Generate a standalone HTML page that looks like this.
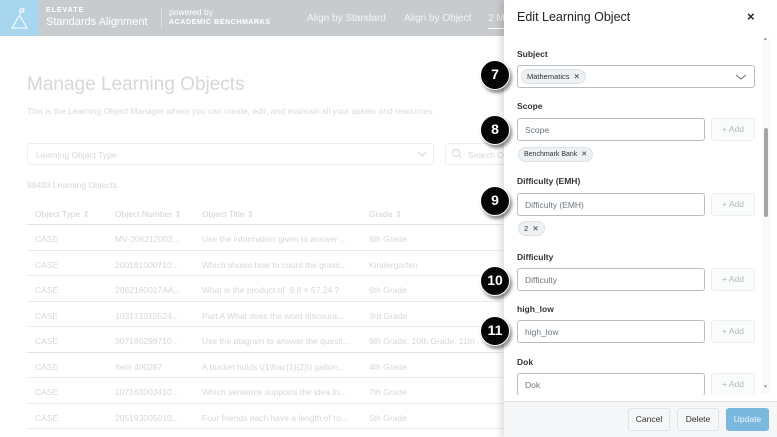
<!DOCTYPE html>
<html><head><meta charset="utf-8">
<style>
*{box-sizing:border-box;margin:0;padding:0}
body{width:777px;height:437px;overflow:hidden;background:#fff;font-family:"Liberation Sans",sans-serif;position:relative}
.a{position:absolute}
.hdr{left:0;top:0;width:777px;height:36px;background:#c8cbce}
.logo{left:0;top:0;width:39px;height:36px;background:#a9d6ef}
.nav{color:#f2f4f5;font-size:10px;top:13px}
.mt{color:#d5d7da;font-size:19px;left:27px;top:74px}
.sub{color:#d8dadc;font-size:8.5px;left:27px;top:106px}
.sel{border:1px solid #eceef0;border-radius:3px;height:22px;top:143px}
.tx{color:#d5d7d9;font-size:8.5px}
.row{left:27px;width:476px;height:1px;background:#ececec}
.pan{left:504px;top:0;width:273px;height:437px;background:#fff;box-shadow:-4px 0 6px rgba(0,0,0,.12)}
.lab{font-size:8.5px;font-weight:bold;color:#333;left:13px}
.inp{left:13px;width:188px;height:23px;border:1px solid #b9bdc2;border-radius:3px;font-size:8.5px;color:#6c7780;padding:6px 7px}
.add{left:207px;width:44px;height:23px;border:1px solid #eceef0;background:#fafbfb;border-radius:3px;font-size:8.5px;color:#b5b9bd;text-align:center;line-height:21px}
.chip{height:15px;border:1px solid #dde1e4;background:#eef1f3;border-radius:8px;font-size:7.5px;color:#333;padding:0 5px;line-height:13px;left:14px}
.bd{width:30px;height:30px;border-radius:50%;background:#050505;border:1.5px solid #fff;box-shadow:2px 3px 3px rgba(0,0,0,.45);color:#fff;font-size:14px;font-weight:bold;text-align:center;line-height:27px;left:480px}
.btn{top:408px;height:23px;border:1px solid #e0e3e6;border-radius:3px;background:#f6f7f8;font-size:8.5px;color:#333;text-align:center;line-height:21px}
</style></head><body>
<div class="a hdr"></div>
<div class="a logo"><svg width="39" height="36"><g fill="none" stroke="#fff" stroke-width="1"><path d="M20 9v7M20 9h4l-1 1.5 1 1.5h-4M19 16l-7 12h15l-7-12"/></g></svg></div>
<div class="a" style="left:46px;top:7px;color:#fff;font-size:7px;font-weight:bold;letter-spacing:1px">ELEVATE</div>
<div class="a" style="left:46px;top:16px;color:#fff;font-size:11px">Standards Alignment</div>
<div class="a" style="left:161px;top:8px;width:1px;height:20px;background:#dfe1e3"></div>
<div class="a" style="left:169px;top:7px;color:#fff;font-size:8.5px">powered by</div>
<div class="a" style="left:169px;top:19px;color:#fff;font-size:7px;font-weight:bold;letter-spacing:.6px">ACADEMIC BENCHMARKS</div>
<div class="a nav" style="left:307px">Align by Standard</div>
<div class="a nav" style="left:404px">Align by Object</div>
<div class="a nav" style="left:488px">2 M</div>
<div class="a" style="left:488px;top:28px;width:16px;height:1px;background:#fff"></div>
<div class="a mt">Manage Learning Objects</div>
<div class="a sub">This is the Learning Object Manager where you can create, edit, and maintain all your assets and resources.</div>
<div class="a sel" style="left:27px;width:407px"></div>
<div class="a tx" style="left:36px;top:150px">Learning Object Type</div>
<svg class="a" style="left:417px;top:150px" width="10" height="8"><path d="M1 2l4 4 4-4" fill="none" stroke="#d5d7d9"/></svg>
<div class="a sel" style="left:445px;width:60px"></div>
<svg class="a" style="left:451px;top:148px" width="12" height="12"><circle cx="5" cy="5" r="3.5" fill="none" stroke="#d5d7d9"/><path d="M7.5 7.5l3 3" stroke="#d5d7d9"/></svg>
<div class="a tx" style="left:468px;top:150px">Search O</div>
<div class="a tx" style="left:27px;top:180px">99493 Learning Objects</div>
<div class="a tx" style="left:35px;top:209px;color:#cfd2d4">Object Type ⇕</div>
<div class="a tx" style="left:115px;top:209px;color:#cfd2d4">Object Number ⇕</div>
<div class="a tx" style="left:202px;top:209px;color:#cfd2d4">Object Title ⇕</div>
<div class="a tx" style="left:369px;top:209px;color:#cfd2d4">Grade ⇕</div>
<div class="a row" style="top:224px;background:#e2e3e4"></div>
<div class="a tx" style="left:35px;top:234px">CASE</div><div class="a tx" style="left:115px;top:234px">MV-206212003...</div><div class="a tx" style="left:202px;top:234px">Use the information given to answer ...</div><div class="a tx" style="left:369px;top:234px">6th Grade</div><div class="a row" style="top:250px"></div>
<div class="a tx" style="left:35px;top:260px">CASE</div><div class="a tx" style="left:115px;top:260px">200191000710...</div><div class="a tx" style="left:202px;top:260px">Which shows how to count the grass...</div><div class="a tx" style="left:369px;top:260px">Kindergarten</div><div class="a row" style="top:275px"></div>
<div class="a tx" style="left:35px;top:285px">CASE</div><div class="a tx" style="left:115px;top:285px">2062160017AA...</div><div class="a tx" style="left:202px;top:285px">What is the product of &nbsp;9.8 × 57.24 ?</div><div class="a tx" style="left:369px;top:285px">6th Grade</div><div class="a row" style="top:301px"></div>
<div class="a tx" style="left:35px;top:311px">CASE</div><div class="a tx" style="left:115px;top:311px">103171010524...</div><div class="a tx" style="left:202px;top:311px">Part A What does the word discoura...</div><div class="a tx" style="left:369px;top:311px">3rd Grade</div><div class="a row" style="top:326px"></div>
<div class="a tx" style="left:35px;top:336px">CASE</div><div class="a tx" style="left:115px;top:336px">307180298710...</div><div class="a tx" style="left:202px;top:336px">Use the diagram to answer the questi...</div><div class="a tx" style="left:369px;top:336px">9th Grade, 10th Grade, 11th</div><div class="a row" style="top:352px;background:#e2e3e4"></div>
<div class="a tx" style="left:35px;top:362px">CASE</div><div class="a tx" style="left:115px;top:362px">Item 400287</div><div class="a tx" style="left:202px;top:362px">A bucket holds \(1\frac{1}{2}\) gallon...</div><div class="a tx" style="left:369px;top:362px">4th Grade</div><div class="a row" style="top:377px"></div>
<div class="a tx" style="left:35px;top:387px">CASE</div><div class="a tx" style="left:115px;top:387px">107163003410...</div><div class="a tx" style="left:202px;top:387px">Which sentence supports the idea th...</div><div class="a tx" style="left:369px;top:387px">7th Grade</div><div class="a row" style="top:403px"></div>
<div class="a tx" style="left:35px;top:413px">CASE</div><div class="a tx" style="left:115px;top:413px">205193005010...</div><div class="a tx" style="left:202px;top:413px">Four friends each have a length of ro...</div><div class="a tx" style="left:369px;top:413px">5th Grade</div><div class="a row" style="top:428px"></div>

<div class="a pan">
 <div class="a" style="left:13px;top:10px;font-size:12.5px;color:#222">Edit Learning Object</div>
 <div class="a" style="left:243px;top:9px;font-size:13px;font-weight:bold;color:#222">×</div>
 <div class="a lab" style="top:49px">Subject</div>
 <div class="a inp" style="top:65px;width:238px;height:23px"></div>
 <div class="a chip" style="top:69px;left:17px">Mathematics &nbsp;✕</div>
 <svg class="a" style="left:231px;top:73px" width="12" height="8"><path d="M1 2l5 4 5-4" fill="none" stroke="#666"/></svg>
 <div class="a lab" style="top:101px">Scope</div>
 <div class="a inp" style="top:118px">Scope</div><div class="a add" style="top:118px">+ Add</div>
 <div class="a chip" style="top:147px;font-size:7px">Benchmark Bank &nbsp;✕</div>
 <div class="a lab" style="top:176px">Difficulty (EMH)</div>
 <div class="a inp" style="top:193px">Difficulty (EMH)</div><div class="a add" style="top:193px">+ Add</div>
 <div class="a chip" style="top:221px">2 &nbsp;✕</div>
 <div class="a lab" style="top:252px">Difficulty</div>
 <div class="a inp" style="top:268px">Difficulty</div><div class="a add" style="top:268px">+ Add</div>
 <div class="a lab" style="top:304px">high_low</div>
 <div class="a inp" style="top:320px">high_low</div><div class="a add" style="top:320px">+ Add</div>
 <div class="a lab" style="top:357px">Dok</div>
 <div class="a" style="left:0;top:373px;width:260px;height:22px;overflow:hidden">
  <div class="a inp" style="top:0">Dok</div><div class="a add" style="top:0">+ Add</div>
 </div>
 <div class="a" style="left:258px;top:38px;width:9px;height:356px;background:#fafafa"></div>
 <div class="a" style="left:260px;top:128px;width:4px;height:89px;background:#a6a6a6;border-radius:2px"></div>
 <div class="a" style="left:259px;top:36px;font-size:5px;color:#999">▲</div>
 <div class="a" style="left:259px;top:384px;font-size:5px;color:#999">▼</div>
 <div class="a" style="left:0;top:401px;width:273px;height:36px;background:#f5f6f7;border-top:1px solid #e3e5e7"></div>
</div>
<div class="a btn" style="left:628px;width:42px">Cancel</div>
<div class="a btn" style="left:677px;width:42px">Delete</div>
<div class="a btn" style="left:726px;width:43px;background:#7ab9dd;border-color:#7ab9dd;color:#eef6fb">Update</div>

<div class="a bd" style="top:60px">7</div>
<div class="a bd" style="top:115px">8</div>
<div class="a bd" style="top:186px">9</div>
<div class="a bd" style="top:266px">10</div>
<div class="a bd" style="top:316px">11</div>
</body></html>
